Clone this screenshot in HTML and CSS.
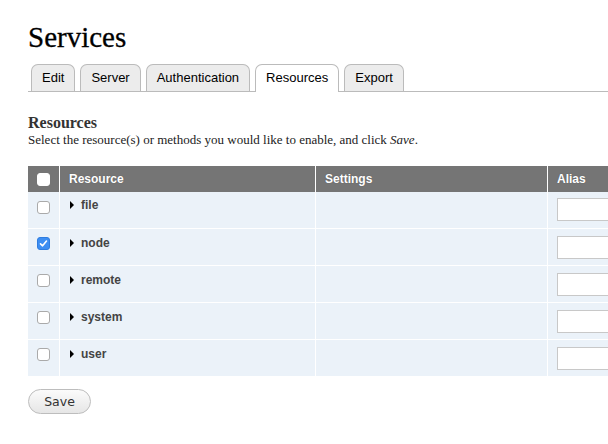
FILE: index.html
```html
<!DOCTYPE html>
<html>
<head>
<meta charset="utf-8">
<link rel="stylesheet" href="styles.css">
</head>
<body>
<div class="page">
  <h1 class="title">Services</h1>
  <ul class="tabs">
    <li class="tab">Edit</li>
    <li class="tab">Server</li>
    <li class="tab">Authentication</li>
    <li class="tab active">Resources</li>
    <li class="tab">Export</li>
  </ul>
  <h2 class="section">Resources</h2>
  <p class="desc">Select the resource(s) or methods you would like to enable, and click <em>Save</em>.</p>
  <div class="table-wrap">
  <table class="grid">
    <thead>
      <tr>
        <th class="c-check"><span class="cb cb-head"></span></th>
        <th class="c-res">Resource</th>
        <th class="c-set">Settings</th>
        <th class="c-alias">Alias</th>
      </tr>
    </thead>
    <tbody>
      <tr><td class="c-check"><span class="cb"></span></td><td class="c-res"><span class="tri"></span>file</td><td></td><td class="c-alias"><span class="inp"></span></td></tr>
      <tr><td class="c-check"><span class="cb checked"><svg width="9" height="9" viewBox="0 0 9 9"><path d="M1.5 4.8 L3.6 6.8 L7.5 2" fill="none" stroke="#fff" stroke-width="1.6" stroke-linecap="round" stroke-linejoin="round"/></svg></span></td><td class="c-res"><span class="tri"></span>node</td><td></td><td class="c-alias"><span class="inp"></span></td></tr>
      <tr><td class="c-check"><span class="cb"></span></td><td class="c-res"><span class="tri"></span>remote</td><td></td><td class="c-alias"><span class="inp"></span></td></tr>
      <tr><td class="c-check"><span class="cb"></span></td><td class="c-res"><span class="tri"></span>system</td><td></td><td class="c-alias"><span class="inp"></span></td></tr>
      <tr><td class="c-check"><span class="cb"></span></td><td class="c-res"><span class="tri"></span>user</td><td></td><td class="c-alias"><span class="inp"></span></td></tr>
    </tbody>
  </table>
  </div>
  <button class="save">Save</button>
</div>
</body>
</html>
```

FILE: styles.css
```css
html, body {
  margin: 0;
  padding: 0;
  overflow: hidden;
  background: #fff;
}
.page {
  padding: 0 0 0 28px;
}
.title {
  margin: 0;
  padding-top: 20px;
  font-family: "Liberation Serif", serif;
  font-weight: normal;
  font-size: 29px;
  line-height: 34px;
  color: #000;
  -webkit-text-stroke: 0.3px #000;
}
.tabs {
  list-style: none;
  margin: 10px 0 0 0;
  padding: 0 0 0 3px;
  display: flex;
  gap: 5px;
  border-bottom: 1px solid #bbb;
  height: 27px;
}
.tab {
  height: 27px;
  box-sizing: border-box;
  padding: 5px 10px 0;
  border: 1px solid #bbb;
  border-bottom: none;
  border-radius: 7px 7px 0 0;
  background: #ececec;
  font-family: "Liberation Sans", sans-serif;
  font-size: 13px;
  line-height: 16px;
  color: #000;
}
.tab.active {
  background: #fff;
  height: 28px;
}
.section {
  margin: 22px 0 0 0;
  font-family: "Liberation Serif", serif;
  font-weight: bold;
  font-size: 16px;
  line-height: 17px;
  color: #333;
}
.desc {
  margin: 1px 0 0 0;
  font-family: "Liberation Serif", serif;
  font-size: 13px;
  line-height: 16px;
  color: #222;
}
.table-wrap {
  margin-top: 18px;
  width: 580px;
  overflow: hidden;
}
.grid {
  border-collapse: separate;
  border-spacing: 0;
  table-layout: fixed;
  width: 660px;
  font-family: "Liberation Sans", sans-serif;
  font-size: 12px;
}
.grid th, .grid td {
  box-sizing: border-box;
  border-left: 1px solid #fff;
}
.grid th {
  background: #757575;
  color: #fff;
  font-weight: bold;
  text-align: left;
  height: 26px;
  padding: 0 9px;
  text-shadow: 0 0 1px #555;
}
.grid .c-check { border-left: none; }
.grid th.c-check { width: 31px; }
.grid th.c-res { width: 256px; }
.grid th.c-set { width: 232px; }
.grid td {
  background: #ebf2f9;
  height: 37px;
  padding: 0 10px;
  vertical-align: top;
  border-top: 1px solid #fff;
  color: #444;
  font-weight: bold;
}
.grid tbody tr:first-child td { border-top: none; height: 36px; }
.grid .c-check { padding: 0; text-align: center; }
.grid td.c-check { padding-top: 8px; }
.grid tbody tr:first-child td.c-check { padding-top: 9px; }
.grid th.c-check { vertical-align: middle; padding-top: 1px; }
.grid td.c-res { padding-top: 7px; padding-left: 10px; line-height: 15px; }
.grid tbody tr:first-child td.c-res { padding-top: 6px; }
.cb {
  display: inline-block;
  width: 11px;
  height: 11px;
  border: 1px solid #aaa;
  border-radius: 3px;
  background: #fff;
  vertical-align: top;
  position: relative;
}
.cb-head { border-color: #fff; }
.cb.checked {
  background: #3d8ef2;
  border-color: #2f7de0;
}
.cb svg { position: absolute; left: 1px; top: 1px; }
.tri {
  display: inline-block;
  width: 0;
  height: 0;
  border-top: 4px solid transparent;
  border-bottom: 4px solid transparent;
  border-left: 4px solid #000;
  margin: 0 7px 0 0;
  vertical-align: 0px;
}
.grid td.c-alias { padding: 7px 0 0 9px; }
.grid tbody tr:first-child td.c-alias { padding-top: 6px; }
.inp {
  display: block;
  height: 21px;
  border: 1px solid #c8c8c8;
  background: #fff;
}
.save {
  margin-top: 13px;
  width: 63px;
  height: 25px;
  border: 1px solid #bdbdbd;
  border-radius: 13px;
  background: linear-gradient(#fbfbfb, #e6e6e6);
  font-family: "DejaVu Sans", sans-serif;
  font-size: 12.5px;
  color: #333;
  padding: 0;
}
```
